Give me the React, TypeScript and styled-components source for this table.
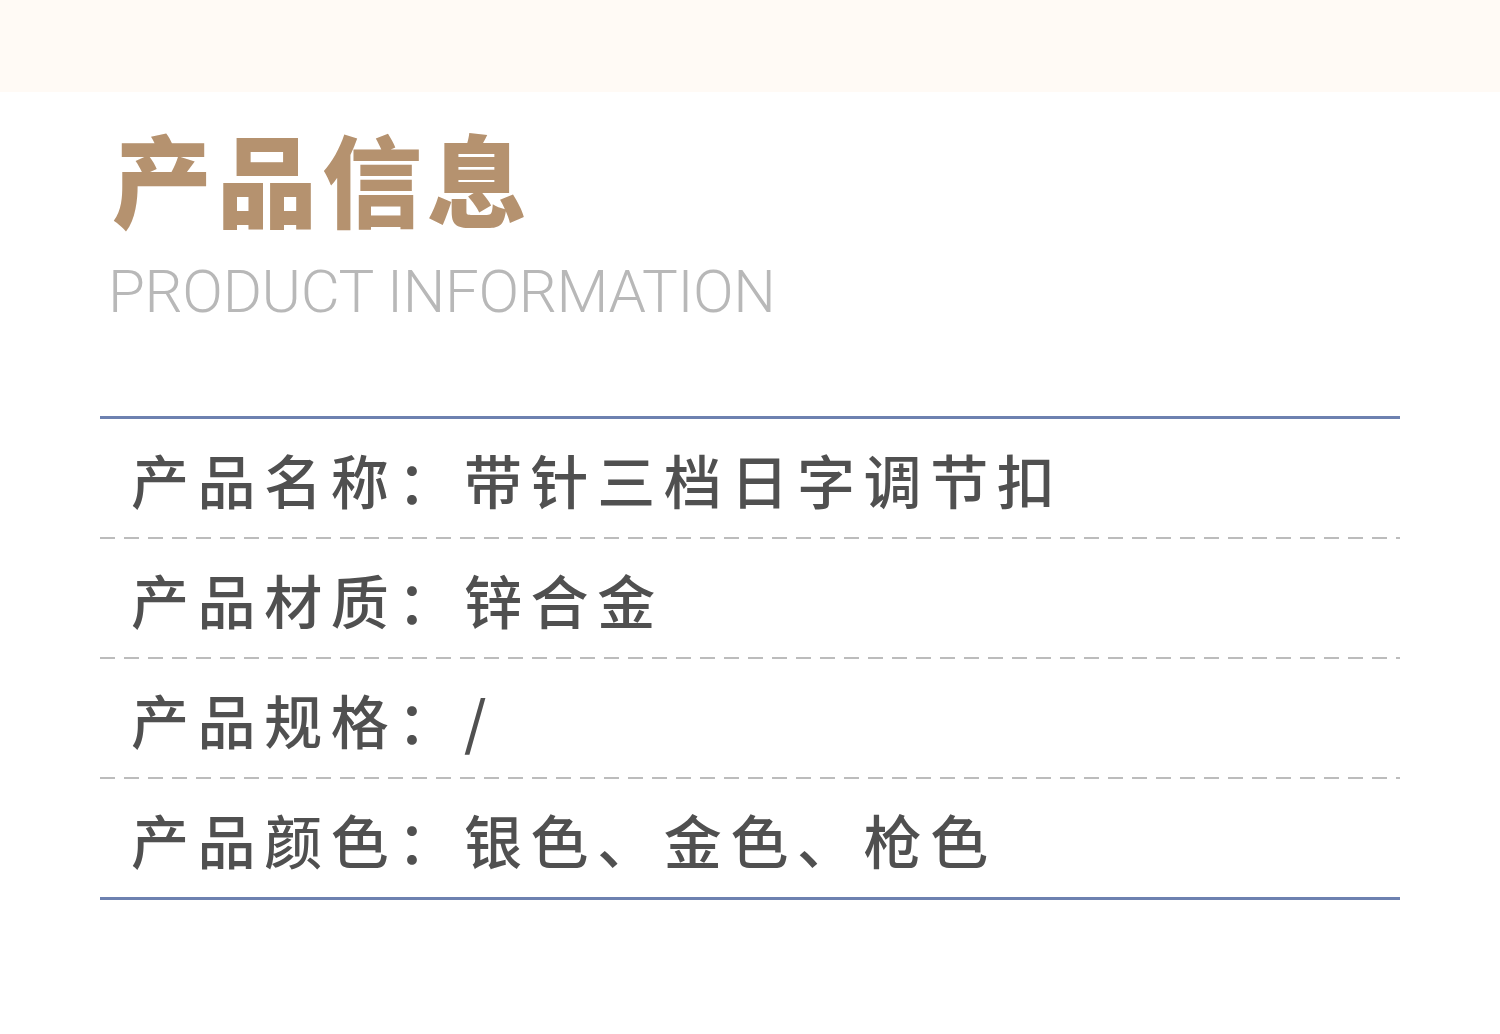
import React from "react";
import styled, { createGlobalStyle } from "styled-components";

const Global = createGlobalStyle`
  html, body { margin: 0; padding: 0; background: #ffffff; }
  body { font-family: "Noto Sans CJK SC", "Noto Sans", sans-serif; }
`;

const Page = styled.div`
  width: 1500px;
  height: 1034px;
  background: #ffffff;
  overflow: hidden;
`;

const TopBand = styled.div`
  height: 92px;
  background: #fffaf5;
`;

const Heading = styled.header`
  padding: 27px 0 0 112px;
  display: flex;
  flex-direction: column;
`;

const Title = styled.h1`
  margin: 0;
  font-family: "Noto Sans CJK SC", sans-serif;
  font-weight: 900;
  font-size: 100px;
  line-height: 116px;
  letter-spacing: 5px;
  color: #b5926f;
`;

const Subtitle = styled.div`
  margin: 22px 0 0 -4px;
  font-family: "Roboto", "Liberation Sans", sans-serif;
  font-weight: 300;
  font-size: 60px;
  line-height: 70px;
  letter-spacing: -0.35px;
  color: #b8b8b8;
`;

const Table = styled.div`
  margin: 89px 100px 0 100px;
  border-top: 3px solid #6d81b0;
  border-bottom: 3px solid #6d81b0;
  display: flex;
  flex-direction: column;
`;

const Row = styled.div<{ $last?: boolean }>`
  display: flex;
  align-items: center;
  padding-top: 2px;
  padding-left: 31px;
  box-sizing: border-box;
  background-image: ${(p) =>
    p.$last
      ? "none"
      : "repeating-linear-gradient(to right, #bcbcbc 0 15px, transparent 15px 24px)"};
  background-size: 100% 2px;
  background-position: left bottom;
  background-repeat: no-repeat;
  height: ${(p) => (p.$last ? "118px" : "120px")};
  padding-bottom: ${(p) => (p.$last ? "0" : "2px")};
`;

const Label = styled.span`
  font-family: "Noto Sans CJK SC", sans-serif;
  font-weight: 500;
  font-size: 58px;
  letter-spacing: 8.6px;
  color: #505050;
  white-space: nowrap;
`;

const rows = [
  { label: "产品名称：", value: "带针三档日字调节扣" },
  { label: "产品材质：", value: "锌合金" },
  { label: "产品规格：", value: "/" },
  { label: "产品颜色：", value: "银色、金色、枪色" },
];

export default function App() {
  return (
    <Page>
      <Global />
      <TopBand />
      <Heading>
        <Title>产品信息</Title>
        <Subtitle>PRODUCT INFORMATION</Subtitle>
      </Heading>
      <Table>
        {rows.map((r, i) => (
          <Row key={r.label} $last={i === rows.length - 1}>
            <Label>
              {r.label}
              {r.value}
            </Label>
          </Row>
        ))}
      </Table>
    </Page>
  );
}
